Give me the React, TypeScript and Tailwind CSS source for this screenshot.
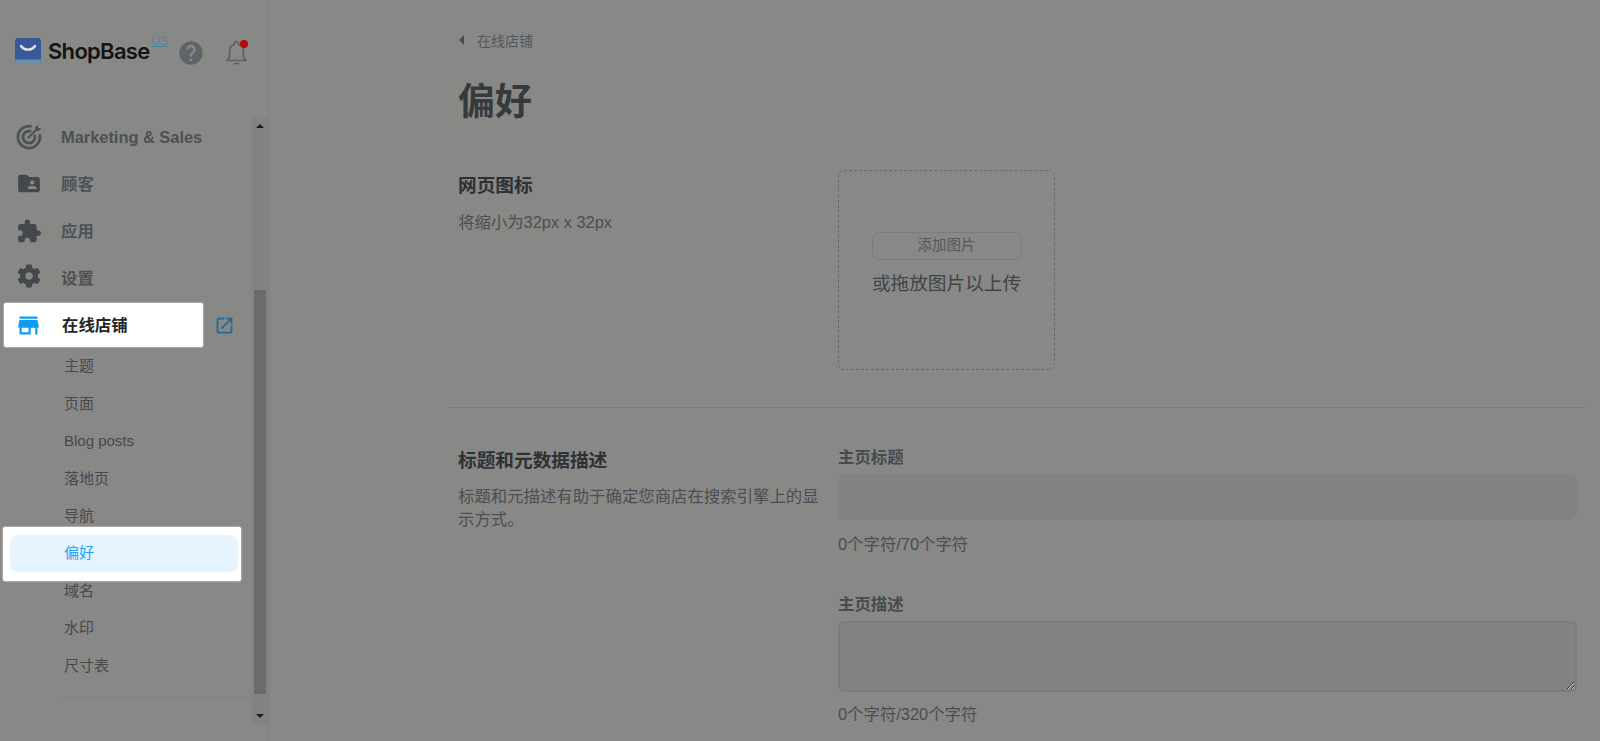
import { FaCog } from "react-icons/fa";
import { MdExtension, MdFolderShared, MdHelp, MdOpenInNew, MdStore } from "react-icons/md";

const fontStack = "font-['Liberation_Sans','Noto_Sans_CJK_SC',sans-serif]";

function TargetIcon() {
  return (
    <svg width="26" height="26" viewBox="0 0 26 26" fill="none" stroke="#4d5257" strokeWidth="2.8" strokeLinecap="round">
      <path d="M14.5 2.2A11 11 0 1 0 23.8 11.5" />
      <path d="M14 7.2A6 6 0 1 0 18.8 12" />
      <path d="M12.5 13.5 21 5" strokeWidth="2.2" />
      <path d="M19 3.5 V7 H22.5 L25.5 4 H22 V0.5 Z" fill="#4d5257" stroke="none" />
    </svg>
  );
}

function BellIcon() {
  return (
    <svg width="24" height="26" viewBox="0 0 24 26" fill="none" stroke="#5b6066" strokeWidth="1.7">
      <path d="M2 20.5h19l-2.5-3V11a6.8 6.8 0 0 0-5-6.6V3.5a2 2 0 0 0-4 0v.9a6.8 6.8 0 0 0-5 6.6v6.5z" strokeLinejoin="round" />
      <path d="M9.5 23.5h4" strokeLinecap="round" />
      <circle cx="19" cy="4" r="4" fill="#b30a0a" stroke="none" />
    </svg>
  );
}

function Logo() {
  return (
    <svg width="26" height="26" viewBox="0 0 26 26">
      <rect width="26" height="26" rx="3.5" fill="#38599a" />
      <path d="M0 21.5h26v1A3.5 3.5 0 0 1 22.5 26h-19A3.5 3.5 0 0 1 0 22.5z" fill="#6a93a8" />
      <path d="M6 8c3 4.8 11 4.8 14 0" fill="none" stroke="#e4e4e2" strokeWidth="2.4" strokeLinecap="round" />
    </svg>
  );
}

function MainItem({ icon, label }: { icon: React.ReactNode; label: string }) {
  return (
    <div className="flex h-[40px] items-center">
      <div className="ml-[16px] flex w-[26px] justify-center">{icon}</div>
      <span className="ml-[19px] text-[16.4px] font-bold text-[#4d5156]">{label}</span>
    </div>
  );
}

function SubItem({ label }: { label: string }) {
  return <div className="flex h-[37.4px] items-center pl-[64px] text-[15px] text-[#47484e]">{label}</div>;
}

function Sidebar() {
  return (
    <aside className="flex h-full w-[269px] shrink-0 flex-col border-r border-[#7e7e7c]">
      <header className="flex h-[117px] shrink-0 pl-[15px] pt-[38px]">
        <Logo />
        <span className="ml-[7px] mt-[-1px] font-['Inter','Liberation_Sans',sans-serif] text-[22px] leading-[28px] font-semibold tracking-[-0.7px] text-[#141414]">
          ShopBase
        </span>
        <span className="ml-[2px] mt-[-3px] h-[12px] border-b border-[#3f7fa6] text-[12px] leading-[12px] text-[#5d7f9d]">US</span>
        <MdHelp className="ml-[9px] mt-[1px] text-[#5f6468]" size={28} />
        <div className="ml-[20px] mt-[2px]">
          <BellIcon />
        </div>
      </header>
      <div className="flex min-h-0 flex-1">
        <nav className="flex w-[252px] shrink-0 flex-col">
          <div className="flex flex-col gap-[7px]">
            <MainItem icon={<TargetIcon />} label="Marketing & Sales" />
            <MainItem icon={<MdFolderShared className="-translate-y-[1px] text-[#43484d]" size={29} />} label="顾客" />
            <MainItem icon={<MdExtension className="text-[#43484d]" size={29} />} label="应用" />
            <MainItem icon={<FaCog className="-translate-y-[2px] text-[#43484d]" size={24} />} label="设置" />
            <div className="-my-[2px] flex h-[44px] items-center">
              <div className="ml-[4px] flex h-[44px] w-[199px] items-center rounded-[2px] bg-white shadow-[0_0_2px_#ffffff]">
                <MdStore className="ml-[11px] text-[#0f9cf5]" size={27} />
                <span className="ml-[20px] text-[16.4px] font-bold text-[#22272b]">在线店铺</span>
              </div>
              <MdOpenInNew className="ml-[11px] text-[#1f6a96]" size={21} />
            </div>
          </div>
          <div className="mt-[3px]">
            <SubItem label="主题" />
            <SubItem label="页面" />
            <SubItem label="Blog posts" />
            <SubItem label="落地页" />
            <SubItem label="导航" />
            <div className="-mb-[9px] -mt-[8px] ml-[3px] w-[238px] rounded-[2px] bg-white pb-[9px] pl-[7px] pr-[3px] pt-[8px] shadow-[0_0_2px_#ffffff]">
              <div className="flex h-[37.4px] items-center rounded-[8px] bg-[#e6f4ff] pl-[54px] text-[15px] text-[#1ea5f5]">偏好</div>
            </div>
            <SubItem label="域名" />
            <SubItem label="水印" />
            <SubItem label="尺寸表" />
          </div>
          <div className="ml-[62px] mt-[12px] h-px bg-[#7f8288]" />
        </nav>
        <div className="flex h-[608px] w-[16px] flex-col items-center bg-[#838381] pr-[1px]">
          <div className="mt-[7px] h-0 w-0 border-x-[4px] border-b-[4px] border-x-transparent border-b-[#1c1c1c]" />
          <div className="mt-[162px] h-[404px] w-[12px] shrink-0 bg-[#6b6b69]" />
          <div className="mt-[20px] h-0 w-0 border-x-[4px] border-t-[4px] border-x-transparent border-t-[#1c1c1c]" />
        </div>
      </div>
    </aside>
  );
}

function Main() {
  return (
    <main className="min-w-0 flex-1 pl-[180px] pr-[14px]">
      <div className="mt-[29px] flex h-[24px] items-center pl-[10px] text-sm text-[#55575e]">
        <span className="h-0 w-0 -translate-y-[1px] border-y-[5px] border-r-[5px] border-y-transparent border-r-[#4a4c55]" />
        <span className="ml-[13px]">在线店铺</span>
      </div>
      <h1 className="mt-[24px] pl-[9px] text-[37px] leading-[52px] font-bold text-[#353a3f]">偏好</h1>
      <section className="mt-[41px] grid grid-cols-[389px_1fr] border-b border-[#7a7b7e] pb-[37px]">
        <div className="pl-[9px] pt-[3px]">
          <h2 className="text-[18.67px] leading-[26px] font-bold text-[#2d3136]">网页图标</h2>
          <p className="mt-[11px] text-[16.4px] leading-[24px] text-[#4b4e52]">将缩小为32px x 32px</p>
        </div>
        <div className="flex h-[200px] w-[217px] flex-col items-center rounded-[6px] border border-dashed border-[#68696b] pt-[61px]">
          <div className="flex h-[28px] w-[150px] items-center justify-center rounded-[8px] border border-[#7a7b7e] text-[14.5px] text-[#55575b]">添加图片</div>
          <p className="mt-[10px] text-[18.67px] leading-[28px] text-[#3f4347]">或拖放图片以上传</p>
        </div>
      </section>
      <section className="grid grid-cols-[389px_1fr] pr-[9px] pt-[37px]">
        <div className="pl-[9px] pr-[17px] pt-[3px]">
          <h2 className="text-[18.67px] leading-[26px] font-bold text-[#2d3136]">标题和元数据描述</h2>
          <p className="mt-[11px] text-[16.4px] leading-[23px] text-[#4b4e52]">标题和元描述有助于确定您商店在搜索引擎上的显示方式。</p>
        </div>
        <div>
          <label className="block text-[16.4px] leading-[24px] font-bold text-[#464b50]">主页标题</label>
          <input className="mt-[5px] block h-[46px] w-full rounded-[8px] bg-[#828280]" />
          <p className="mt-[12px] text-[16.4px] leading-[24px] text-[#4b4e52]">0个字符/70个字符</p>
          <label className="mt-[36px] block text-[16.4px] leading-[24px] font-bold text-[#464b50]">主页描述</label>
          <textarea className="mt-[5px] block h-[71px] w-full rounded-[6px] border-2 border-[#7c7c7b] bg-[#828280]" />
          <p className="mt-[10px] text-[16.4px] leading-[24px] text-[#4b4e52]">0个字符/320个字符</p>
        </div>
      </section>
    </main>
  );
}

export default function App() {
  return (
    <div className={`flex h-screen overflow-hidden bg-[#888886] ${fontStack}`}>
      <Sidebar />
      <Main />
    </div>
  );
}
